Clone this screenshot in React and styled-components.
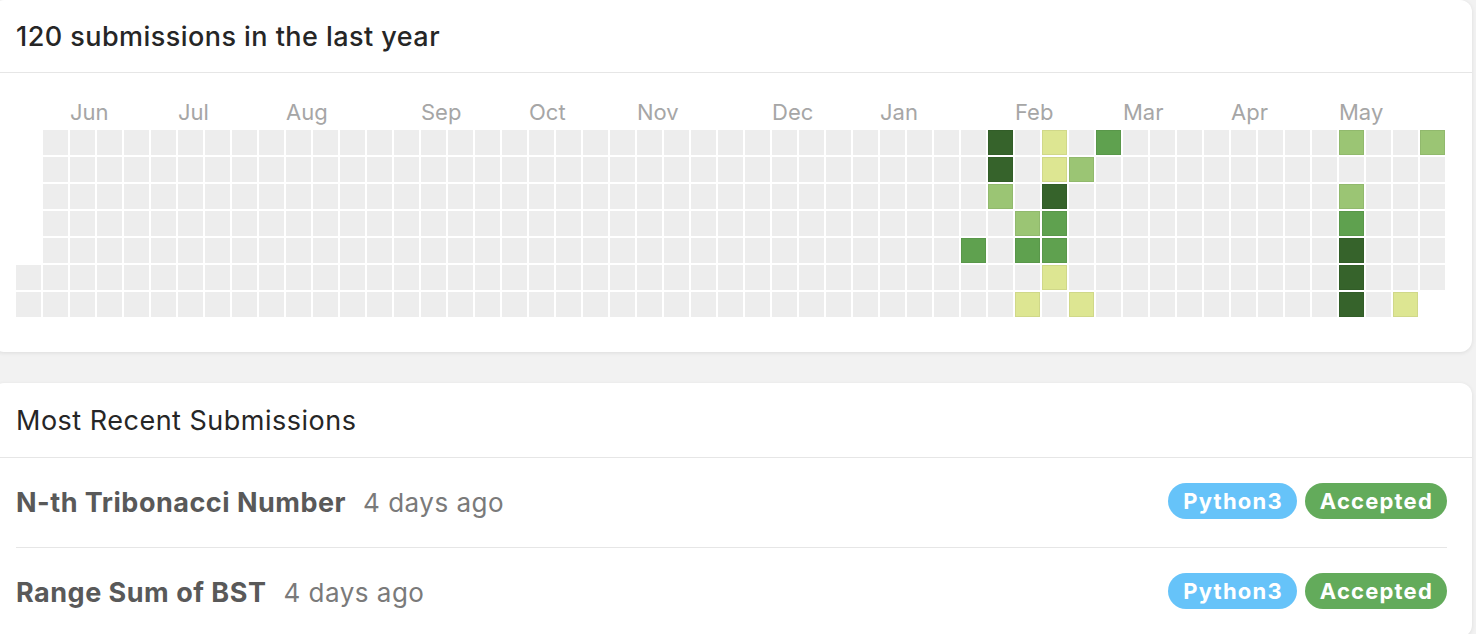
import React from 'react';
import styled, { createGlobalStyle } from 'styled-components';

const GlobalStyle = createGlobalStyle`
  body {
    margin: 0;
    background: #f2f2f2;
    font-family: Inter, "Noto Sans", "Liberation Sans", sans-serif;
    -webkit-font-smoothing: antialiased;
    overflow: hidden;
  }
`;

const COLS = 53;
const CELL = 25;
const GAP = 2;

const MONTHS = [
  { name: 'Jun', col: 2 },
  { name: 'Jul', col: 6 },
  { name: 'Aug', col: 10 },
  { name: 'Sep', col: 15 },
  { name: 'Oct', col: 19 },
  { name: 'Nov', col: 23 },
  { name: 'Dec', col: 28 },
  { name: 'Jan', col: 32 },
  { name: 'Feb', col: 37 },
  { name: 'Mar', col: 41 },
  { name: 'Apr', col: 45 },
  { name: 'May', col: 49 },
];

// week column -> { weekday row: level }
const ACTIVE = {
  35: { 4: 3 },
  36: { 0: 4, 1: 4, 2: 2 },
  37: { 3: 2, 4: 3, 6: 1 },
  38: { 0: 1, 1: 1, 2: 4, 3: 3, 4: 3, 5: 1 },
  39: { 1: 2, 6: 1 },
  40: { 0: 3 },
  49: { 0: 2, 2: 2, 3: 3, 4: 4, 5: 4, 6: 4 },
  51: { 6: 1 },
  52: { 0: 2 },
};

const LEVELS = ['#ededed', '#dde692', '#9bc574', '#5fa14f', '#36632b'];

const SUBMISSIONS = [
  { title: 'N-th Tribonacci Number', when: '4 days ago', lang: 'Python3', status: 'Accepted' },
  { title: 'Range Sum of BST', when: '4 days ago', lang: 'Python3', status: 'Accepted' },
];

const Page = styled.div`
  display: flex;
  flex-direction: column;
  gap: 31px;
`;

const Card = styled.section`
  width: 1480px;
  margin-left: -8px;
  background: #fff;
  border-radius: 12px;
  box-shadow: 0 1px 4px rgba(0, 0, 0, 0.09);
`;

const CardHeader = styled.div`
  height: ${({ $h }) => $h}px;
  display: flex;
  align-items: center;
  padding: 0 24px;
  border-bottom: 1px solid #e6e6e6;
  font-size: 27px;
  letter-spacing: ${({ $track }) => $track}px;
  font-weight: ${({ $weight }) => $weight};
  color: #262626;
`;

const CalendarBody = styled.div`
  padding: 27px 24px 35px 24px;
  display: flex;
  flex-direction: column;
  gap: 6px;
`;

const MonthRow = styled.div`
  display: grid;
  grid-template-columns: repeat(${COLS}, ${CELL}px);
  column-gap: ${GAP}px;
  height: 24px;
  align-items: center;
`;

const Month = styled.span`
  grid-column: ${({ $col }) => $col + 1} / span 3;
  grid-row: 1;
  font-size: 22px;
  color: #a6a6a6;
  white-space: nowrap;
  line-height: 24px;
`;

const HeatGrid = styled.div`
  display: grid;
  grid-template-columns: repeat(${COLS}, ${CELL}px);
  grid-template-rows: repeat(7, ${CELL}px);
  grid-auto-flow: column;
  gap: ${GAP}px;
`;

const Cell = styled.div`
  background: ${({ $level }) => LEVELS[$level]};
  visibility: ${({ $hidden }) => ($hidden ? 'hidden' : 'visible')};
  box-shadow: ${({ $level }) => ($level ? 'inset 0 0 0 1px rgba(0,0,0,0.06)' : 'none')};
`;

const List = styled.div`
  display: flex;
  flex-direction: column;
  padding: 0 25px 0 24px;
`;

const Row = styled.div`
  height: 89px;
  display: flex;
  align-items: center;
  justify-content: space-between;
  border-top: ${({ $first }) => ($first ? 'none' : '1px solid #e6e6e6')};
`;

const RowText = styled.div`
  display: flex;
  align-items: baseline;
  gap: 17px;
`;

const ProblemTitle = styled.span`
  font-size: 27px;
  font-weight: 700;
  letter-spacing: 0.5px;
  color: #595959;
`;

const When = styled.span`
  font-size: 26px;
  letter-spacing: 0.5px;
  color: #7a7a7a;
`;

const Badges = styled.div`
  display: flex;
  gap: 8px;
  margin-top: -3px;
`;

const Badge = styled.span`
  height: 36px;
  padding: 0 14px 0 15px;
  border-radius: 18px;
  display: inline-flex;
  align-items: center;
  background: ${({ $color }) => $color};
  color: #fff;
  font-size: 22px;
  font-weight: 700;
  letter-spacing: 1.2px;
`;

function Calendar() {
  const cells = [];
  for (let c = 0; c < COLS; c++) {
    for (let r = 0; r < 7; r++) {
      const hidden = (c === 0 && r < 5) || (c === COLS - 1 && r === 6);
      const level = (ACTIVE[c] && ACTIVE[c][r]) || 0;
      cells.push(<Cell key={`${c}-${r}`} $hidden={hidden} $level={level} />);
    }
  }
  return (
    <CalendarBody>
      <MonthRow>
        {MONTHS.map((m) => (
          <Month key={m.name} $col={m.col}>{m.name}</Month>
        ))}
      </MonthRow>
      <HeatGrid>{cells}</HeatGrid>
    </CalendarBody>
  );
}

export default function App() {
  return (
    <Page>
      <GlobalStyle />
      <Card>
        <CardHeader $h={72} $weight={500} $track={0.45}>120 submissions in the last year</CardHeader>
        <Calendar />
      </Card>
      <Card>
        <CardHeader $h={74} $weight={400} $track={0.5}>Most Recent Submissions</CardHeader>
        <List>
          {SUBMISSIONS.map((s, i) => (
            <Row key={s.title} $first={i === 0}>
              <RowText>
                <ProblemTitle>{s.title}</ProblemTitle>
                <When>{s.when}</When>
              </RowText>
              <Badges>
                <Badge $color="#66c3f9">{s.lang}</Badge>
                <Badge $color="#63ab5b">{s.status}</Badge>
              </Badges>
            </Row>
          ))}
        </List>
      </Card>
    </Page>
  );
}
